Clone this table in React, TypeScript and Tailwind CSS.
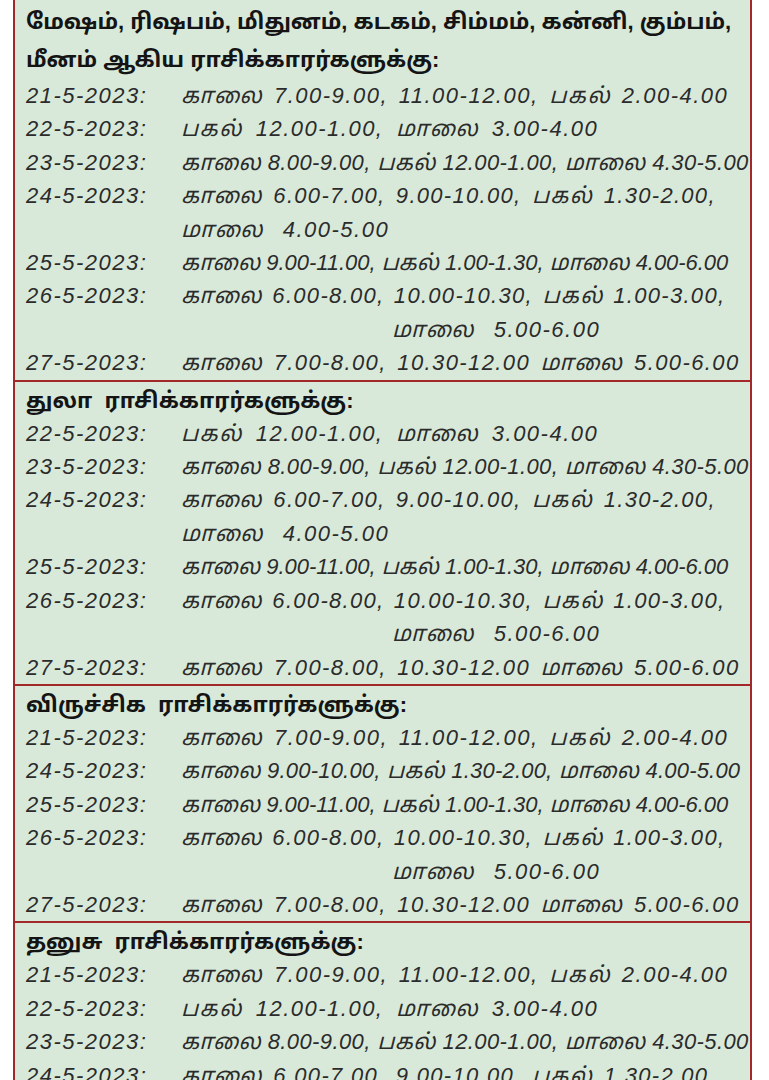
type Row = { date?: string; text: string; indent?: boolean; sp: string }
type Section = { heading: string[]; rows: Row[] }

// each printed line is stretched differently in the scan, so spacing is set per line
const r21 = {
  date: '21-5-2023:',
  text: 'காலை 7.00-9.00, 11.00-12.00, பகல் 2.00-4.00',
  sp: 'tracking-[1.5px] [word-spacing:3px]',
}
const r22 = {
  date: '22-5-2023:',
  text: 'பகல் 12.00-1.00, மாலை 3.00-4.00',
  sp: 'tracking-[1.5px] [word-spacing:5px]',
}
const r23 = {
  date: '23-5-2023:',
  text: 'காலை 8.00-9.00, பகல் 12.00-1.00, மாலை 4.30-5.00',
  sp: 'tracking-[0.4px]',
}
const r24 = [
  {
    date: '24-5-2023:',
    text: 'காலை 6.00-7.00, 9.00-10.00, பகல் 1.30-2.00,',
    sp: 'tracking-[1.3px] [word-spacing:3px]',
  },
  { text: 'மாலை 4.00-5.00', sp: 'tracking-[1.5px] [word-spacing:11px]' },
]
const r25 = {
  date: '25-5-2023:',
  text: 'காலை 9.00-11.00, பகல் 1.00-1.30, மாலை 4.00-6.00',
  sp: 'tracking-[-0.05px]',
}
const r26 = [
  {
    date: '26-5-2023:',
    text: 'காலை 6.00-8.00, 10.00-10.30, பகல் 1.00-3.00,',
    sp: 'tracking-[1.3px] [word-spacing:2px]',
  },
  { text: 'மாலை 5.00-6.00', indent: true, sp: 'tracking-[1.5px] [word-spacing:11px]' },
]
const r27 = {
  date: '27-5-2023:',
  text: 'காலை 7.00-8.00, 10.30-12.00 மாலை 5.00-6.00',
  sp: 'tracking-[1.4px] [word-spacing:3px]',
}

const sections: Section[] = [
  {
    heading: [
      'மேஷம், ரிஷபம், மிதுனம், கடகம், சிம்மம், கன்னி, கும்பம்,',
      'மீனம் ஆகிய ராசிக்காரர்களுக்கு:',
    ],
    rows: [r21, r22, r23, ...r24, r25, ...r26, r27],
  },
  {
    heading: ['துலா ராசிக்காரர்களுக்கு:'],
    rows: [r22, r23, ...r24, r25, ...r26, r27],
  },
  {
    heading: ['விருச்சிக ராசிக்காரர்களுக்கு:'],
    rows: [
      r21,
      {
        date: '24-5-2023:',
        text: 'காலை 9.00-10.00, பகல் 1.30-2.00, மாலை 4.00-5.00',
        sp: 'tracking-[0.2px]',
      },
      r25,
      ...r26,
      r27,
    ],
  },
  {
    heading: ['தனுசு ராசிக்காரர்களுக்கு:'],
    rows: [r21, r22, r23, { ...r24[0] }],
  },
]

const tamil = "font-['Liberation_Sans','Noto_Sans_Tamil',sans-serif]"

export default function App() {
  return (
    <div className="h-[1080px] overflow-hidden bg-white">
      <div className="ml-[13px] w-[739px] border-x-2 border-[#a3282a] bg-[#d8e9da]">
        {sections.map((sec, i) => (
          <div key={i} className={i > 0 ? 'border-t-2 border-[#a3282a]' : ''}>
            <div className={`pl-[11px] ${i === 0 ? 'pt-[3px]' : 'pt-[2px]'}`}>
              {sec.heading.map((h) => (
                <div
                  key={h}
                  className={`${tamil} whitespace-nowrap text-[22px] font-bold text-[#141414] ${i === 0 ? 'leading-[38px]' : 'leading-[33px] [word-spacing:6px]'}`}
                >
                  {h}
                </div>
              ))}
            </div>
            <div className="pl-[11px]">
              {sec.rows.map((row, j) => (
                <div
                  key={j}
                  className={`${tamil} flex whitespace-nowrap text-[22px] italic leading-[33.4px] text-[#2b2b2b]`}
                >
                  <span className="w-[155px] shrink-0 tracking-[1.5px]">{row.date}</span>
                  {row.indent && <span className="w-[211px] shrink-0" />}
                  <span className={row.sp}>{row.text}</span>
                </div>
              ))}
            </div>
          </div>
        ))}
      </div>
    </div>
  )
}
